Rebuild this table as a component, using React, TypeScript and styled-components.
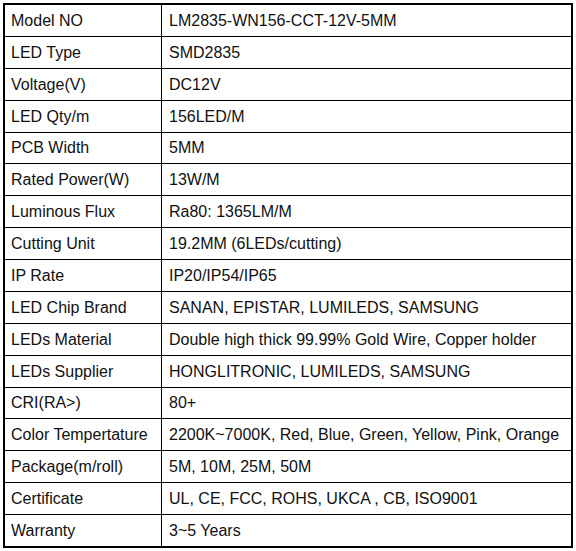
import styled, { createGlobalStyle } from "styled-components";

const GlobalStyle = createGlobalStyle`
  html, body {
    margin: 0;
    padding: 0;
    background: #ffffff;
  }
  body {
    font-family: "Liberation Sans", Arial, sans-serif;
  }
`;

const specs: [string, string][] = [
  ["Model NO", "LM2835-WN156-CCT-12V-5MM"],
  ["LED Type", "SMD2835"],
  ["Voltage(V)", "DC12V"],
  ["LED Qty/m", "156LED/M"],
  ["PCB Width", "5MM"],
  ["Rated Power(W)", "13W/M"],
  ["Luminous Flux", "Ra80: 1365LM/M"],
  ["Cutting Unit", "19.2MM (6LEDs/cutting)"],
  ["IP Rate", "IP20/IP54/IP65"],
  ["LED Chip Brand", "SANAN, EPISTAR, LUMILEDS, SAMSUNG"],
  ["LEDs Material", "Double high thick 99.99% Gold Wire, Copper holder"],
  ["LEDs Supplier", "HONGLITRONIC, LUMILEDS, SAMSUNG"],
  ["CRI(RA>)", "80+"],
  ["Color Tempertature", "2200K~7000K, Red, Blue, Green, Yellow, Pink, Orange"],
  ["Package(m/roll)", "5M, 10M, 25M, 50M"],
  ["Certificate", "UL, CE, FCC, ROHS, UKCA , CB, ISO9001"],
  ["Warranty", "3~5 Years"],
];

const Wrap = styled.div`
  padding: 3px 0 0 3px;
`;

const Table = styled.table`
  width: 570px;
  border-collapse: collapse;
  border: 2px solid #000;
  font-size: 16px;
  color: #111;
`;

const Row = styled.tr`
  height: 31.875px;
`;

const Cell = styled.td<{ $label?: boolean }>`
  border: 1px solid #000;
  padding: 1px 0 0 ${(p) => (p.$label ? "6px" : "7px")};
  width: ${(p) => (p.$label ? "150px" : "auto")};
  height: 29.875px;
  white-space: nowrap;
  vertical-align: middle;
  text-align: left;
`;

export default function App() {
  return (
    <Wrap>
      <GlobalStyle />
      <Table>
        <tbody>
          {specs.map(([k, v]) => (
            <Row key={k}>
              <Cell $label>{k}</Cell>
              <Cell>{v}</Cell>
            </Row>
          ))}
        </tbody>
      </Table>
    </Wrap>
  );
}
